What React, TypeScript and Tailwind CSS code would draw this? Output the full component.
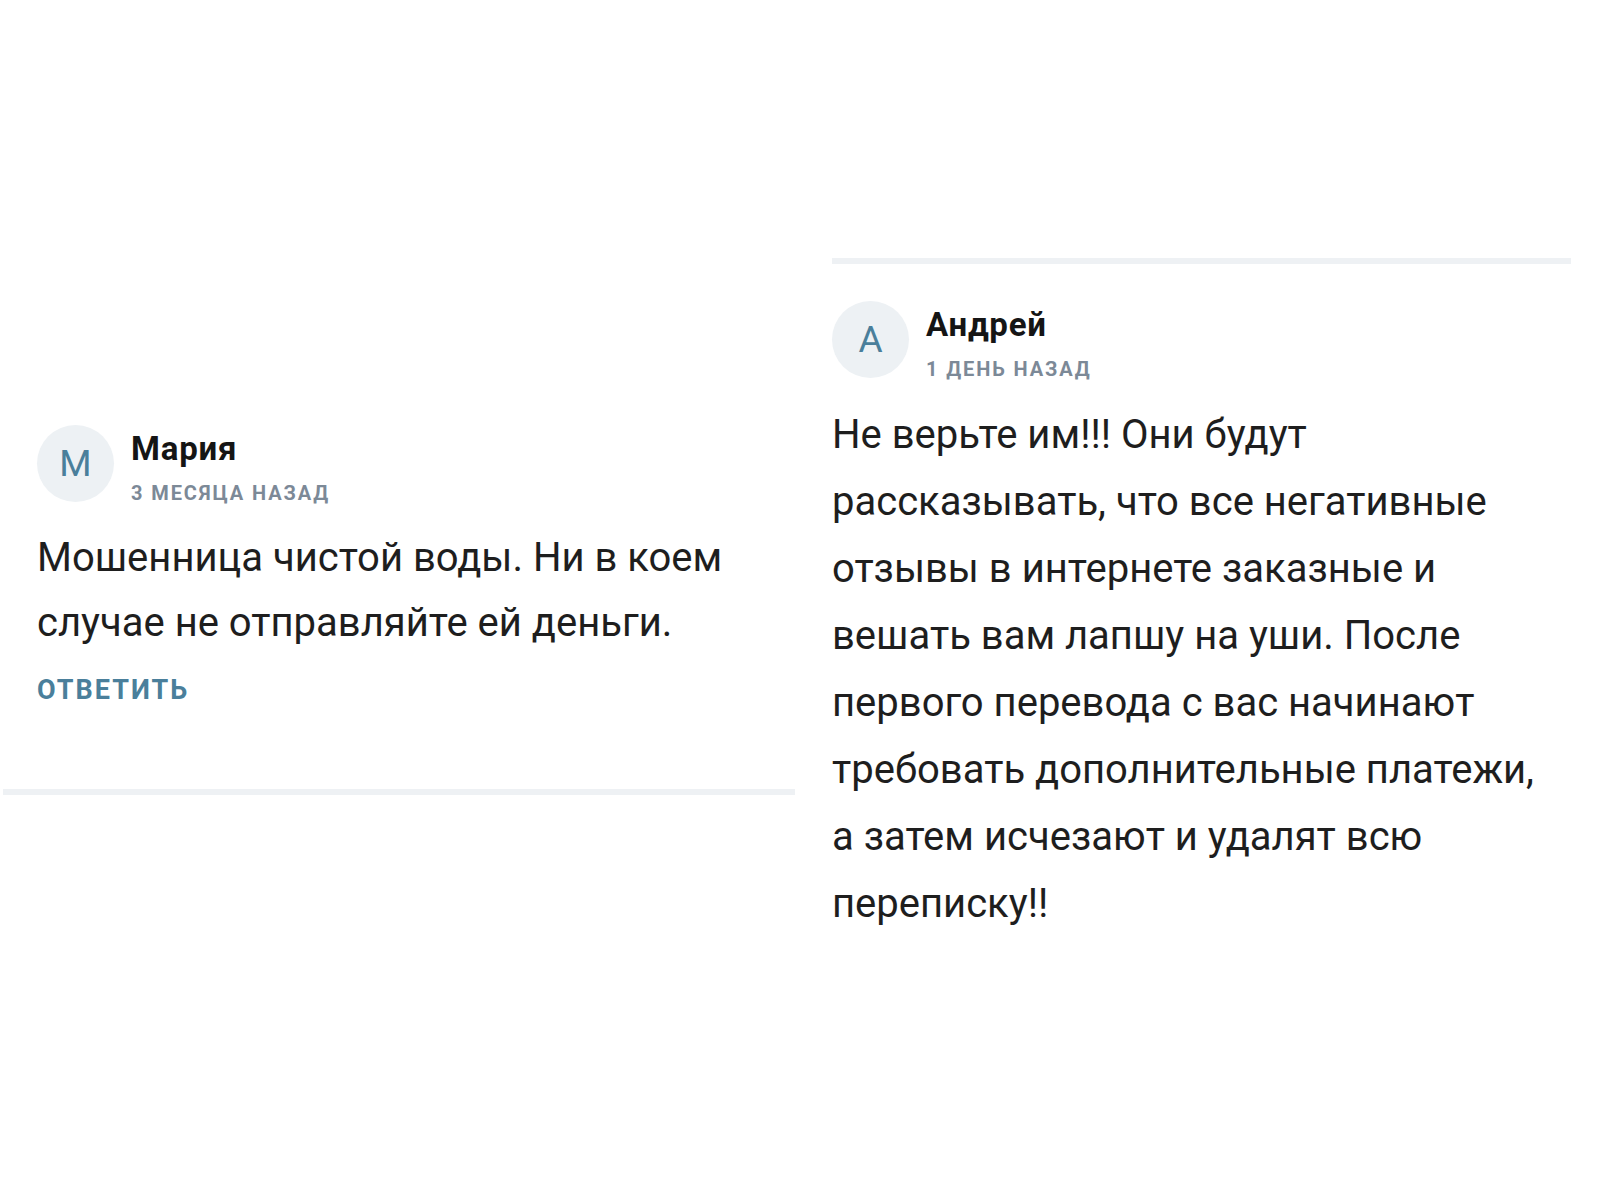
import React from 'react';

interface CommentProps {
  initial: string;
  name: string;
  date: string;
  text: string[];
  leading: string;
  reply?: boolean;
}

const Comment: React.FC<CommentProps> = ({ initial, name, date, text, leading, reply }) => {
  return (
    <div className="flex flex-col">
      <div className="flex items-start gap-[17px]">
        <div className="w-[77px] h-[77px] rounded-full bg-[#edf1f4] flex items-center justify-center text-[37px] text-[#4a7f9b] leading-none">
          {initial}
        </div>
        <div className="flex flex-col">
          <div className="mt-2 text-[33px] leading-[32px] font-bold tracking-[0.8px] text-[#151515]">{name}</div>
          <div className="mt-4 text-[20px] leading-[24px] font-bold uppercase tracking-[1.9px] text-[#7c8997]">
            {date}
          </div>
        </div>
      </div>
      <div className={`mt-5 text-[40px] text-[#1e1e1e] ${leading}`}>
        {text.map((line, i) => (
          <div key={i} className="whitespace-nowrap">{line}</div>
        ))}
      </div>
      {reply && (
        <div className="mt-[20px] text-[27px] leading-[30px] font-bold uppercase text-[#4a7f9b] tracking-[2px]">
          Ответить
        </div>
      )}
    </div>
  );
};

export default function App() {
  return (
    <div className="w-[1600px] h-[1200px] bg-white flex font-['Roboto',sans-serif]">
      <div className="w-[800px] flex flex-col pt-[425px]">
        <div className="pl-[37px]">
          <Comment
            initial="М"
            name="Мария"
            date="3 месяца назад"
            text={['Мошенница чистой воды. Ни в коем', 'случае не отправляйте ей деньги.']}
            leading="leading-[65px]"
            reply
          />
        </div>
        {/* разделитель */}
        <div className="mt-[84px] ml-[3px] w-[792px] h-[6px] bg-[#eef1f4]" />
      </div>
      <div className="flex-1 flex flex-col pt-[258px] pl-[32px]">
        <div className="w-[739px] h-[6px] bg-[#eef1f4]" />
        <div className="mt-[37px]">
          <Comment
            initial="А"
            name="Андрей"
            date="1 день назад"
            text={[
              'Не верьте им!!! Они будут',
              'рассказывать, что все негативные',
              'отзывы в интернете заказные и',
              'вешать вам лапшу на уши. После',
              'первого перевода с вас начинают',
              'требовать дополнительные платежи,',
              'а затем исчезают и удалят всю',
              'переписку!!',
            ]}
            leading="leading-[67px]"
          />
        </div>
      </div>
    </div>
  );
}
